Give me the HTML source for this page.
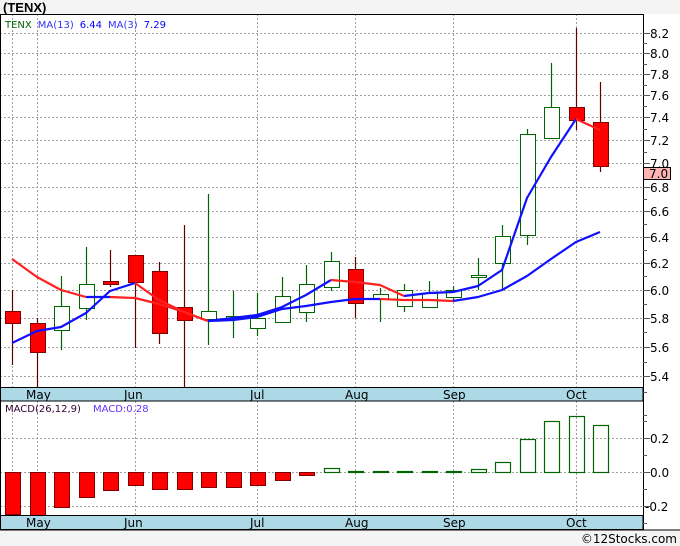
<!DOCTYPE html>
<html><head><meta charset="utf-8"><style>
html,body{margin:0;padding:0;background:#f4f4f4;}
svg{display:block;font-family:"DejaVu Sans","Liberation Sans",sans-serif;}
</style></head><body>
<svg width="680" height="546" viewBox="0 0 680 546" xmlns="http://www.w3.org/2000/svg">
<rect x="0" y="0" width="680" height="546" fill="#f4f4f4"/>
<text x="3" y="12" font-size="13" font-weight="bold" fill="#000" font-family="Liberation Sans, sans-serif">(TENX)</text>
<rect x="0" y="14" width="680" height="516" fill="#fff"/>
<g stroke="#a0a0a0" stroke-width="1" stroke-dasharray="2,2">
<line x1="0" y1="33.5" x2="643" y2="33.5"/><line x1="0" y1="53.5" x2="643" y2="53.5"/><line x1="0" y1="74.5" x2="643" y2="74.5"/><line x1="0" y1="95.5" x2="643" y2="95.5"/><line x1="0" y1="117.5" x2="643" y2="117.5"/><line x1="0" y1="140.5" x2="643" y2="140.5"/><line x1="0" y1="163.5" x2="643" y2="163.5"/><line x1="0" y1="187.5" x2="643" y2="187.5"/><line x1="0" y1="211.5" x2="643" y2="211.5"/><line x1="0" y1="237.5" x2="643" y2="237.5"/><line x1="0" y1="263.5" x2="643" y2="263.5"/><line x1="0" y1="290.5" x2="643" y2="290.5"/><line x1="0" y1="318.5" x2="643" y2="318.5"/><line x1="0" y1="347.5" x2="643" y2="347.5"/><line x1="0" y1="376.5" x2="643" y2="376.5"/>
<line x1="12.5" y1="14" x2="12.5" y2="387"/><line x1="37.5" y1="14" x2="37.5" y2="387"/><line x1="135.5" y1="14" x2="135.5" y2="387"/><line x1="257.5" y1="14" x2="257.5" y2="387"/><line x1="355.5" y1="14" x2="355.5" y2="387"/><line x1="453.5" y1="14" x2="453.5" y2="387"/><line x1="576.5" y1="14" x2="576.5" y2="387"/>
<line x1="0" y1="438.5" x2="643" y2="438.5"/><line x1="0" y1="472.5" x2="643" y2="472.5"/><line x1="0" y1="506.5" x2="643" y2="506.5"/>
<line x1="12.5" y1="401" x2="12.5" y2="515"/><line x1="37.5" y1="401" x2="37.5" y2="515"/><line x1="135.5" y1="401" x2="135.5" y2="515"/><line x1="257.5" y1="401" x2="257.5" y2="515"/><line x1="355.5" y1="401" x2="355.5" y2="515"/><line x1="453.5" y1="401" x2="453.5" y2="515"/><line x1="576.5" y1="401" x2="576.5" y2="515"/>
</g>
<text x="5" y="28" font-size="10"><tspan fill="#006400">TENX</tspan><tspan fill="#3333ff" dx="6">MA(13)</tspan><tspan fill="#0000ff" dx="6">6.44</tspan><tspan fill="#3333ff" dx="6">MA(3)</tspan><tspan fill="#0000ff" dx="6">7.29</tspan></text>
<g stroke-width="1.2">
<g stroke="#600000">
<line x1="12.5" y1="290" x2="12.5" y2="365"/><line x1="37.5" y1="318" x2="37.5" y2="387"/><line x1="110.5" y1="250" x2="110.5" y2="287"/><line x1="135.5" y1="255" x2="135.5" y2="348"/><line x1="159.5" y1="262" x2="159.5" y2="344"/><line x1="184.5" y1="225" x2="184.5" y2="387"/><line x1="355.5" y1="257" x2="355.5" y2="318"/><line x1="576.5" y1="28" x2="576.5" y2="130"/><line x1="600.5" y1="82" x2="600.5" y2="172"/>
</g>
<g stroke="#006400">
<line x1="61.5" y1="276" x2="61.5" y2="350"/><line x1="86.5" y1="247" x2="86.5" y2="320"/><line x1="208.5" y1="194" x2="208.5" y2="345"/><line x1="233.5" y1="291" x2="233.5" y2="338"/><line x1="257.5" y1="293" x2="257.5" y2="336"/><line x1="282.5" y1="277" x2="282.5" y2="323"/><line x1="306.5" y1="265" x2="306.5" y2="322"/><line x1="331.5" y1="252" x2="331.5" y2="291"/><line x1="380.5" y1="288" x2="380.5" y2="322"/><line x1="404.5" y1="284" x2="404.5" y2="312"/><line x1="429.5" y1="281" x2="429.5" y2="307"/><line x1="453.5" y1="286" x2="453.5" y2="300"/><line x1="478.5" y1="258" x2="478.5" y2="290"/><line x1="502.5" y1="225" x2="502.5" y2="289"/><line x1="527.5" y1="129" x2="527.5" y2="245"/><line x1="551.5" y1="63" x2="551.5" y2="138"/>
</g>
</g>
<g fill="#ff0000" stroke="#800000" stroke-width="1">
<rect x="5.5" y="311.5" width="15" height="12"/><rect x="30.5" y="323.5" width="15" height="29"/><rect x="103.5" y="281.5" width="15" height="3"/><rect x="128.5" y="255.5" width="15" height="27"/><rect x="152.5" y="271.5" width="15" height="62"/><rect x="177.5" y="307.5" width="15" height="13"/><rect x="348.5" y="269.5" width="15" height="34"/><rect x="569.5" y="107.5" width="15" height="13"/><rect x="593.5" y="122.5" width="15" height="44"/>
</g>
<g fill="#fff" stroke="#006400" stroke-width="1">
<rect x="54.5" y="306.5" width="15" height="24"/><rect x="79.5" y="284.5" width="15" height="24"/><rect x="201.5" y="311.5" width="15" height="8"/><rect x="226.5" y="316.5" width="15" height="2"/><rect x="250.5" y="318.5" width="15" height="10"/><rect x="275.5" y="296.5" width="15" height="26"/><rect x="299.5" y="284.5" width="15" height="28"/><rect x="324.5" y="261.5" width="15" height="26"/><rect x="373.5" y="294.5" width="15" height="5"/><rect x="397.5" y="290.5" width="15" height="16"/><rect x="422.5" y="293.5" width="15" height="14"/><rect x="446.5" y="290.5" width="15" height="7"/><rect x="471.5" y="275.5" width="15" height="2"/><rect x="495.5" y="236.5" width="15" height="27"/><rect x="520.5" y="134.5" width="15" height="101"/><rect x="544.5" y="107.5" width="15" height="31"/>
</g>
<g fill="none" stroke-width="2.2" stroke-linejoin="round">
<polyline stroke="#ff2020" points="12,259 37,277 61,290 86,297"/>
<polyline stroke="#1010ff" points="86,297 110,297"/>
<polyline stroke="#ff2020" points="110,297 135,298 159,304 184,312 208,321"/>
<polyline stroke="#1010ff" points="208,321 233,318 257,315 282,307 306,295 331,280"/>
<polyline stroke="#ff2020" points="331,280 355,282 380,285 404,296"/>
<polyline stroke="#1010ff" points="404,296 429,293 453,292 478,286 502,270 527,198 551,157 576,119"/>
<polyline stroke="#ff2020" points="576,119 600,130"/>
<polyline stroke="#1010ff" points="12,343 37,331 61,327 86,313 110,291 135,283"/>
<polyline stroke="#ff2020" points="135,283 159,300 184,312 208,321"/>
<polyline stroke="#1010ff" points="208,321 233,320 257,317 282,309 306,306 331,302 355,299 380,299"/>
<polyline stroke="#ff2020" points="380,299 404,300 429,300 453,301"/>
<polyline stroke="#1010ff" points="453,301 478,297 502,290 527,276 551,259 576,242 600,232"/>
</g>
<text x="5" y="412" font-size="10"><tspan fill="#330033">MACD(26,12,9)</tspan><tspan fill="#6633ff" dx="12">MACD:0.28</tspan></text>
<g fill="#ff0000" stroke="#800000" stroke-width="1">
<rect x="5.5" y="472.5" width="15" height="42"/><rect x="30.5" y="472.5" width="15" height="43"/><rect x="54.5" y="472.5" width="15" height="35"/><rect x="79.5" y="472.5" width="15" height="25"/><rect x="103.5" y="472.5" width="15" height="18"/><rect x="128.5" y="472.5" width="15" height="13"/><rect x="152.5" y="472.5" width="15" height="17"/><rect x="177.5" y="472.5" width="15" height="17"/><rect x="201.5" y="472.5" width="15" height="15"/><rect x="226.5" y="472.5" width="15" height="15"/><rect x="250.5" y="472.5" width="15" height="13"/><rect x="275.5" y="472.5" width="15" height="8"/><rect x="299.5" y="472.5" width="15" height="3"/>
</g>
<g fill="none" stroke="#006400" stroke-width="1.2">
<rect x="324.5" y="468.5" width="15" height="4"/><rect x="348.5" y="471.5" width="15" height="1"/><rect x="373.5" y="471.5" width="15" height="1"/><rect x="397.5" y="471.5" width="15" height="1"/><rect x="422.5" y="471.5" width="15" height="1"/><rect x="446.5" y="471.5" width="15" height="1"/><rect x="471.5" y="469.5" width="15" height="3"/><rect x="495.5" y="462.5" width="15" height="10"/><rect x="520.5" y="439.5" width="15" height="33"/><rect x="544.5" y="421.5" width="15" height="51"/><rect x="569.5" y="416.5" width="15" height="56"/><rect x="593.5" y="425.5" width="15" height="47"/>
</g>
<rect x="0" y="387.5" width="643" height="13.5" fill="#add8e6" stroke="#000" stroke-width="1"/>
<rect x="0" y="515.5" width="643" height="14" fill="#add8e6" stroke="#000" stroke-width="1"/>
<g font-size="12" fill="#000">
<text x="26" y="399">May</text><text x="124" y="399">Jun</text><text x="250" y="399">Jul</text><text x="345" y="399">Aug</text><text x="443" y="399">Sep</text><text x="566" y="399">Oct</text>
<text x="26" y="527">May</text><text x="124" y="527">Jun</text><text x="250" y="527">Jul</text><text x="345" y="527">Aug</text><text x="443" y="527">Sep</text><text x="566" y="527">Oct</text>
</g>
<line x1="0" y1="14.5" x2="643" y2="14.5" stroke="#000"/>
<line x1="0.5" y1="14" x2="0.5" y2="530" stroke="#000"/>
<line x1="643.5" y1="14" x2="643.5" y2="530" stroke="#000"/>
<line x1="0" y1="530" x2="680" y2="530" stroke="#000"/>
<g stroke="#555" stroke-width="1">
<line x1="643" y1="33.5" x2="650" y2="33.5"/><line x1="643" y1="43.5" x2="647" y2="43.5"/><line x1="643" y1="53.5" x2="650" y2="53.5"/><line x1="643" y1="64.5" x2="647" y2="64.5"/><line x1="643" y1="74.5" x2="650" y2="74.5"/><line x1="643" y1="85.5" x2="647" y2="85.5"/><line x1="643" y1="95.5" x2="650" y2="95.5"/><line x1="643" y1="106.5" x2="647" y2="106.5"/><line x1="643" y1="117.5" x2="650" y2="117.5"/><line x1="643" y1="129.5" x2="647" y2="129.5"/><line x1="643" y1="140.5" x2="650" y2="140.5"/><line x1="643" y1="152.5" x2="647" y2="152.5"/><line x1="643" y1="163.5" x2="650" y2="163.5"/><line x1="643" y1="175.5" x2="647" y2="175.5"/><line x1="643" y1="187.5" x2="650" y2="187.5"/><line x1="643" y1="199.5" x2="647" y2="199.5"/><line x1="643" y1="211.5" x2="650" y2="211.5"/><line x1="643" y1="224.5" x2="647" y2="224.5"/><line x1="643" y1="237.5" x2="650" y2="237.5"/><line x1="643" y1="250.5" x2="647" y2="250.5"/><line x1="643" y1="263.5" x2="650" y2="263.5"/><line x1="643" y1="276.5" x2="647" y2="276.5"/><line x1="643" y1="290.5" x2="650" y2="290.5"/><line x1="643" y1="304.5" x2="647" y2="304.5"/><line x1="643" y1="318.5" x2="650" y2="318.5"/><line x1="643" y1="332.5" x2="647" y2="332.5"/><line x1="643" y1="347.5" x2="650" y2="347.5"/><line x1="643" y1="362.5" x2="647" y2="362.5"/><line x1="643" y1="376.5" x2="650" y2="376.5"/><line x1="643" y1="392.5" x2="647" y2="392.5"/>
<line x1="643" y1="415.5" x2="647" y2="415.5"/><line x1="643" y1="421.5" x2="647" y2="421.5"/><line x1="643" y1="438.5" x2="650" y2="438.5"/><line x1="643" y1="455.5" x2="647" y2="455.5"/><line x1="643" y1="472.5" x2="650" y2="472.5"/><line x1="643" y1="489.5" x2="647" y2="489.5"/><line x1="643" y1="506.5" x2="650" y2="506.5"/><line x1="643" y1="523.5" x2="647" y2="523.5"/>
</g>
<g font-size="12" fill="#000">
<text x="650" y="38">8.2</text><text x="650" y="58">8.0</text><text x="650" y="79">7.8</text><text x="650" y="100">7.6</text><text x="650" y="122">7.4</text><text x="650" y="145">7.2</text><text x="650" y="168">7.0</text><text x="650" y="192">6.8</text><text x="650" y="216">6.6</text><text x="650" y="242">6.4</text><text x="650" y="268">6.2</text><text x="650" y="295">6.0</text><text x="650" y="323">5.8</text><text x="650" y="352">5.6</text><text x="650" y="381">5.4</text>
<text x="650" y="443">0.2</text><text x="650" y="477">0.0</text><text x="645" y="511">-0.2</text>
</g>
<rect x="643.5" y="167.5" width="27" height="12" fill="#ffb4b4" stroke="#000"/>
<text x="649" y="178" font-size="12" fill="#000">7.0</text>
<rect x="0" y="531" width="680" height="15" fill="#f4f4f4"/>
<text x="677" y="543" font-size="12" text-anchor="end" fill="#000">©12Stocks.com</text>
</svg>
</body></html>
